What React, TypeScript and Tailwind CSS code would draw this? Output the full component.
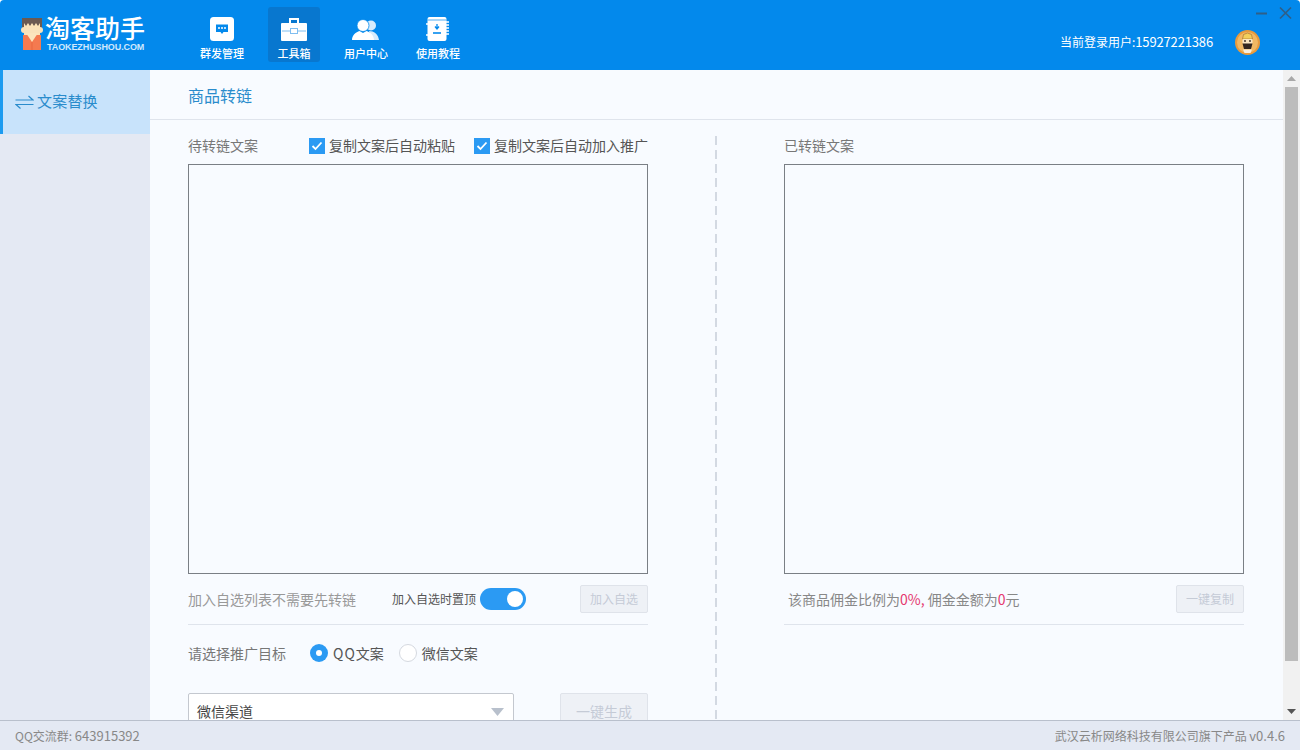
import React from "react";

const font = { fontFamily: '"Noto Sans CJK SC", "Liberation Sans", sans-serif' };

function LogoIcon() {
  return (
    <svg width="22" height="32" viewBox="0 0 22 32" className="shrink-0">
      <rect x="1" y="0" width="20" height="10" fill="#6b5a52" />
      <rect x="3" y="5" width="16" height="15" fill="#fbe3b8" />
      <path d="M3 5l2 3 2-3 2 3 2-3 2 3 2-3 2 3 2-3V3H3z" fill="#6b5a52" />
      <rect x="0" y="9" width="22" height="6" rx="3" fill="#f9e2ba" />
      <path d="M2 17h18v15H2z" fill="#f47a50" />
      <path d="M5 15h12l-6 9z" fill="#fbe5bd" />
      <path d="M11 24v8" stroke="#e9673f" strokeWidth="1" />
    </svg>
  );
}

function ChatIcon() {
  return (
    <svg width="24" height="24" viewBox="0 0 24 24">
      <rect x="0" y="0" width="24" height="24" rx="3.5" fill="#fff" />
      <path d="M6 7.5h12v7.5h-4.5L12 17l-1.5-2H6z" fill="#0389ec" />
      <circle cx="9" cy="11" r="1" fill="#fff" />
      <circle cx="12" cy="11" r="1" fill="#fff" />
      <circle cx="15" cy="11" r="1" fill="#fff" />
    </svg>
  );
}

function CaseIcon() {
  return (
    <svg width="26" height="23" viewBox="0 0 26 23">
      <path d="M9 5V1h8V5" fill="none" stroke="#fff" strokeWidth="2" />
      <rect x="0" y="5" width="26" height="18" rx="1" fill="#fff" />
      <path d="M1 13h8.5M16.5 13H25" stroke="#7fbef0" strokeWidth="1" />
      <rect x="9.5" y="10.5" width="7" height="5" fill="#fff" stroke="#7fbef0" strokeWidth="1" />
    </svg>
  );
}

function UsersIcon() {
  return (
    <svg width="28" height="22" viewBox="0 0 28 22">
      <circle cx="19" cy="6.5" r="5" fill="#d8ecfc" />
      <path d="M17 12c5 0 9 3 10 9H19z" fill="#d8ecfc" />
      <circle cx="11" cy="6.5" r="6" fill="#fff" stroke="#0389ec" strokeWidth="0.8" />
      <path d="M0 21c0-5 4-8 7.5-9l3.5 2 3.5-2c3.5 1 7.5 4 7.5 9z" fill="#fff" />
    </svg>
  );
}

function BookIcon() {
  return (
    <svg width="24" height="24" viewBox="0 0 24 24">
      <rect x="1.5" y="0" width="19" height="24" rx="2" fill="#fff" />
      <path d="M1.5 3h19" stroke="#0389ec" strokeWidth="0.7" />
      <path d="M20 5h3M20 8h3M20 11h3M20 14h3M20 17h3" stroke="#fff" strokeWidth="1.4" />
      <path d="M0 7h3M0 18h3" stroke="#fff" strokeWidth="1.4" />
      <path d="M11 7v4M9 9.5l2 2.5 2-2.5" fill="none" stroke="#0389ec" strokeWidth="1.3" />
      <path d="M7 16h8" stroke="#0389ec" strokeWidth="1.6" />
    </svg>
  );
}

function Avatar() {
  return (
    <svg width="25" height="25" viewBox="0 0 25 25">
      <circle cx="12.5" cy="12.5" r="12.5" fill="#e89a3c" />
      <circle cx="12.5" cy="12.5" r="10.5" fill="#f1b863" />
      <path d="M7.5 9l1-4.5 4-1.5 4 1.5 1 4.5z" fill="#f3cf5a" stroke="#a0672a" strokeWidth="0.6" />
      <rect x="7.5" y="9" width="10" height="5" rx="1" fill="#fbe6c2" />
      <circle cx="10" cy="11" r="0.9" fill="#2f2420" />
      <circle cx="15" cy="11" r="0.9" fill="#2f2420" />
      <path d="M7.5 13.5h10l-1.5 5.5h-7z" fill="#33261f" />
      <path d="M8 19.5h9l-1.5 3.5h-6z" fill="#f7efe0" />
    </svg>
  );
}

function Check() {
  return (
    <span className="w-4 h-4 bg-[#2b9af3] flex items-center justify-center shrink-0">
      <svg width="12" height="10" viewBox="0 0 12 10">
        <path d="M1.5 5l3 3 6-6.5" fill="none" stroke="#fff" strokeWidth="1.8" />
      </svg>
    </span>
  );
}

function NavItem({ label, active, children }: { label: string; active?: boolean; children: React.ReactNode }) {
  return (
    <div className="w-[72px] flex justify-center">
      <div className={`w-[52px] h-[55px] flex flex-col items-center rounded-[3px] ${active ? "bg-[#0877cf]" : ""}`}>
        <div className="h-[34px] flex items-end justify-center">{children}</div>
        <div className="mt-[4px] text-[11px] leading-[16px] font-medium text-white whitespace-nowrap">{label}</div>
      </div>
    </div>
  );
}

function DisabledButton({ label, className }: { label: string; className: string }) {
  return (
    <div className={`flex items-center justify-center bg-[#eef1f6] border border-[#dfe3ea] rounded-[2px] text-[#c5cbd6] ${className}`}>
      {label}
    </div>
  );
}

export default function App() {
  return (
    <div style={font} className="w-[1300px] h-[750px] flex flex-col overflow-hidden bg-white">
      <header className="relative h-[70px] shrink-0 bg-[#0389ec] flex items-start rounded-t-[4px]">
        <div className="w-[186px] h-[70px] shrink-0 pl-[21px] flex items-start gap-[2px]">
          <span className="mt-[18px] flex"><LogoIcon /></span>
          <div className="mt-[15px] flex flex-col text-white">
            <div className="text-[25px] leading-[24px] font-medium whitespace-nowrap">淘客助手</div>
            <div className="mt-[3px] ml-[2px] text-[9px] leading-[11px] font-bold tracking-[-0.1px] text-[#cfe8fd] whitespace-nowrap" style={{ fontFamily: '"Liberation Sans", sans-serif' }}>
              TAOKEZHUSHOU.COM
            </div>
          </div>
        </div>
        <nav className="flex pt-[7px]">
          <NavItem label="群发管理"><ChatIcon /></NavItem>
          <NavItem label="工具箱" active><CaseIcon /></NavItem>
          <NavItem label="用户中心"><UsersIcon /></NavItem>
          <NavItem label="使用教程"><BookIcon /></NavItem>
        </nav>
        <div className="ml-auto h-[70px] flex items-center pr-[40px] pt-[14px]">
          <span className="text-[12px] text-white whitespace-nowrap">
            当前登录用户:<span className="text-[13px] tracking-[-0.15px]">15927221386</span>
          </span>
          <span className="ml-[22px] flex"><Avatar /></span>
        </div>
        <svg className="absolute left-[1255px] top-[6px]" width="38" height="14" viewBox="0 0 38 14">
          <path d="M1 7.5h11" stroke="#2f5f88" strokeWidth="2" />
          <path d="M25 1.5l11 11M36 1.5l-11 11" stroke="#2f5f88" strokeWidth="1.7" />
        </svg>
      </header>

      <div className="flex-1 flex min-h-0">
        <aside className="w-[150px] shrink-0 bg-[#e4e9f3]">
          <div className="h-[64px] bg-[#c8e3fb] border-l-[3px] border-[#1c9bf0] pl-[12px] flex items-center gap-[3px] text-[15px] text-[#2a8ccc]">
            <svg width="19" height="14" viewBox="0 0 19 14">
              <path d="M0.5 5h17.5L13.5 1" fill="none" stroke="#2a8ccc" strokeWidth="1.2" />
              <path d="M18.5 9.5H1l4.5 4" fill="none" stroke="#2a8ccc" strokeWidth="1.2" />
            </svg>
            <span className="pb-[2px] tracking-[0.2px]">文案替换</span>
          </div>
        </aside>

        <main className="flex-1 min-w-0 bg-[#f8fbff] flex flex-col overflow-hidden">
          <div className="h-[50px] shrink-0 pl-[38px] border-b border-[#dfe4ec] flex items-center text-[16px] text-[#2a8ccc]">
            商品转链
          </div>
          <div className="flex-1 min-h-0 flex pt-[16px] pl-[38px]">
            <section className="w-[460px] shrink-0">
              <div className="h-[28px] flex items-start">
                <span className="w-[123px] text-[14px] leading-[18px] text-[#777]">待转链文案</span>
                <label className="flex items-center gap-[4px] h-[20px] text-[14px] text-[#555] whitespace-nowrap">
                  <Check /><span className="pb-[2px]">复制文案后自动粘贴</span>
                </label>
                <label className="ml-[19px] flex items-center gap-[4px] h-[20px] text-[14px] text-[#555] whitespace-nowrap">
                  <Check /><span className="pb-[2px]">复制文案后自动加入推广</span>
                </label>
              </div>
              <textarea className="block w-[460px] h-[410px] border border-[#7a7f85] bg-transparent resize-none outline-none" />
              <div className="mt-[11px] pb-[11px] border-b border-[#dfe4ec] flex items-center h-[40px]">
                <span className="w-[204px] text-[14px] text-[#999] whitespace-nowrap">加入自选列表不需要先转链</span>
                <span className="text-[12px] text-[#555] whitespace-nowrap">加入自选时置顶</span>
                <span className="ml-[4px] w-[46px] h-[22px] rounded-full bg-[#2b9af3] flex items-center justify-end pr-[3px]">
                  <span className="w-[16px] h-[16px] rounded-full bg-white" />
                </span>
                <DisabledButton label="加入自选" className="ml-auto w-[68px] h-[28px] text-[12px]" />
              </div>
              <div className="h-[56px] flex items-center text-[14px] text-[#555] whitespace-nowrap">
                <span className="w-[122px] text-[#777]">请选择推广目标</span>
                <span className="w-[18px] h-[18px] rounded-full bg-[#2b9af3] flex items-center justify-center">
                  <span className="w-[6px] h-[6px] rounded-full bg-white" />
                </span>
                <span className="ml-[5px]"><span className="tracking-[1px]">QQ</span>文案</span>
                <span className="ml-[15px] w-[18px] h-[18px] rounded-full bg-white border border-[#d5d9e0]" />
                <span className="ml-[5px]">微信文案</span>
              </div>
              <div className="mt-[12px] flex">
                <div className="relative w-[326px] h-[38px] bg-white border border-[#c4c8cf] rounded-[2px] pl-[8px] pt-[7px] text-[14px] leading-[20px] text-[#444]">
                  微信渠道
                  <svg className="absolute right-[9px] top-[14px]" width="13" height="8" viewBox="0 0 13 8">
                    <path d="M0 0h13L6.5 8z" fill="#b8c0cc" />
                  </svg>
                </div>
                <DisabledButton label="一键生成" className="ml-[46px] w-[88px] h-[38px] text-[14px] pb-[2px]" />
              </div>
            </section>

            <div className="ml-[67px] w-[2px] h-[584px] shrink-0 bg-[repeating-linear-gradient(to_bottom,#d3d9e2_0,#d3d9e2_9px,transparent_9px,transparent_14px)]" />

            <section className="ml-[67px] w-[460px] shrink-0">
              <div className="h-[28px] text-[14px] leading-[18px] text-[#777]">已转链文案</div>
              <textarea className="block w-[460px] h-[410px] border border-[#7a7f85] bg-transparent resize-none outline-none" />
              <div className="mt-[11px] pb-[11px] border-b border-[#dfe4ec] flex items-center h-[40px]">
                <span className="pl-[4px] text-[14px] text-[#888] whitespace-nowrap">
                  该商品佣金比例为<span className="text-[#e5376f]">0%,</span> 佣金金额为<span className="text-[#e5376f]">0</span>元
                </span>
                <DisabledButton label="一键复制" className="ml-auto w-[68px] h-[28px] text-[12px]" />
              </div>
            </section>
          </div>
        </main>

        <div className="w-[17px] shrink-0 bg-[#f1f1f1] flex flex-col items-center">
          <div className="h-[17px] flex items-center justify-center">
            <svg width="9" height="5" viewBox="0 0 9 5"><path d="M0 5h9L4.5 0z" fill="#a8a8a8" /></svg>
          </div>
          <div className="w-[13px] h-[574px] bg-[#bcbcbc]" />
          <div className="mt-auto h-[17px] flex items-center justify-center">
            <svg width="9" height="5" viewBox="0 0 9 5"><path d="M0 0h9L4.5 5z" fill="#555" /></svg>
          </div>
        </div>
      </div>

      <footer className="h-[30px] shrink-0 bg-[#e4e9f3] border-t border-[#b9c0cc] flex items-center justify-between pl-[15px] pr-[15px] text-[12px] text-[#888]">
        <span>QQ交流群: <span className="text-[13px]">643915392</span></span>
        <span>武汉云析网络科技有限公司旗下产品 <span className="text-[13px]">v0.4.6</span></span>
      </footer>
    </div>
  );
}
